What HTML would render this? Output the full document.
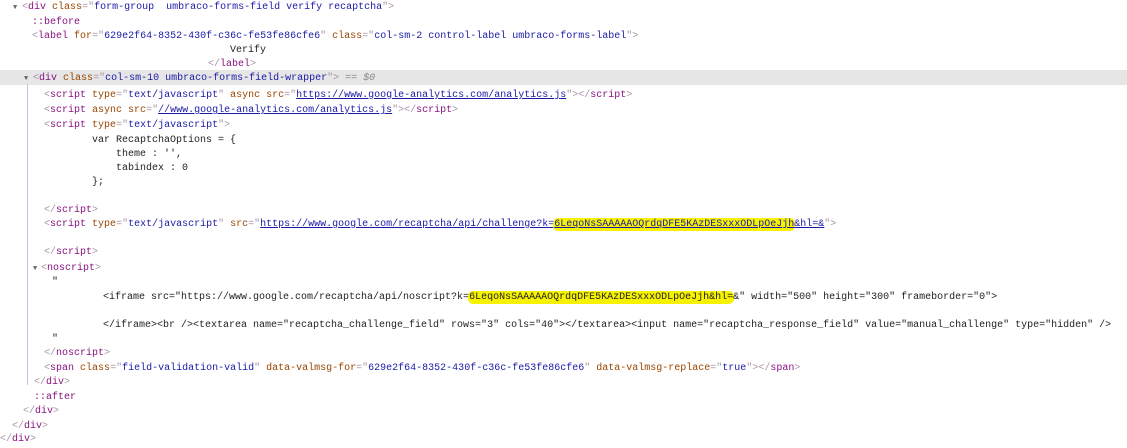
<!DOCTYPE html>
<html><head><meta charset="utf-8"><style>
body{margin:0;width:1127px;height:445px;background:#fff;overflow:hidden;position:relative;font-family:"Liberation Mono",monospace;font-size:10px;color:#222}
.w{position:absolute;left:0;top:3px;width:1127px;height:445px}
.l{position:absolute;white-space:pre;line-height:14px;height:14px}
.t{color:#881280}.p{color:#a894a6}.a{color:#994500}.v{color:#1a1aa6}.u{color:#1a1aa6;text-decoration:underline}
.hl{background:#f7f200;border-radius:4px;box-shadow:0 0 0 1px #f7f200}
.tri{position:absolute;font-size:7px;color:#666}
.g{position:absolute;left:27px;top:84px;width:1px;height:301px;background:#b8c8e0}
.sel{position:absolute;left:0;top:70px;width:1127px;height:15px;background:#e6e6e6}
.d{color:#888;font-style:italic}
</style></head><body>
<div class="sel"></div>
<div class="g"></div>
<div class="w">
<span class="tri" style="left:13px;top:1px">▼</span>
<div class="l" style="left:22px;top:-2px"><span class="p">&lt;</span><span class="t">div</span> <span class="a">class</span><span class="p">="</span><span class="v">form-group  umbraco-forms-field verify recaptcha</span><span class="p">"&gt;</span></div>
<div class="l" style="left:32px;top:13px"><span class="t">::before</span></div>
<div class="l" style="left:32px;top:27px"><span class="p">&lt;</span><span class="t">label</span> <span class="a">for</span><span class="p">="</span><span class="v">629e2f64-8352-430f-c36c-fe53fe86cfe6</span><span class="p">"</span> <span class="a">class</span><span class="p">="</span><span class="v">col-sm-2 control-label umbraco-forms-label</span><span class="p">"&gt;</span></div>
<div class="l" style="left:230px;top:41px">Verify</div>
<div class="l" style="left:208px;top:55px"><span class="p">&lt;/</span><span class="t">label</span><span class="p">&gt;</span></div>
<span class="tri" style="left:24px;top:72px">▼</span>
<div class="l" style="left:33px;top:69px"><span class="p">&lt;</span><span class="t">div</span> <span class="a">class</span><span class="p">="</span><span class="v">col-sm-10 umbraco-forms-field-wrapper</span><span class="p">"&gt;</span> <span class="d">== $0</span></div>
<div class="l" style="left:44px;top:86px"><span class="p">&lt;</span><span class="t">script</span> <span class="a">type</span><span class="p">="</span><span class="v">text/javascript</span><span class="p">"</span> <span class="a">async src</span><span class="p">="</span><span class="u">https://www.google-analytics.com/analytics.js</span><span class="p">"&gt;&lt;/</span><span class="t">script</span><span class="p">&gt;</span></div>
<div class="l" style="left:44px;top:101px"><span class="p">&lt;</span><span class="t">script</span> <span class="a">async src</span><span class="p">="</span><span class="u">//www.google-analytics.com/analytics.js</span><span class="p">"&gt;&lt;/</span><span class="t">script</span><span class="p">&gt;</span></div>
<div class="l" style="left:44px;top:116px"><span class="p">&lt;</span><span class="t">script</span> <span class="a">type</span><span class="p">="</span><span class="v">text/javascript</span><span class="p">"&gt;</span></div>
<div class="l" style="left:92px;top:131px">var RecaptchaOptions = {</div>
<div class="l" style="left:116px;top:145px">theme : '',</div>
<div class="l" style="left:116px;top:159px">tabindex : 0</div>
<div class="l" style="left:92px;top:173px">};</div>
<div class="l" style="left:44px;top:201px"><span class="p">&lt;/</span><span class="t">script</span><span class="p">&gt;</span></div>
<div class="l" style="left:44px;top:215px"><span class="p">&lt;</span><span class="t">script</span> <span class="a">type</span><span class="p">="</span><span class="v">text/javascript</span><span class="p">"</span> <span class="a">src</span><span class="p">="</span><span class="u">https://www.google.com/recaptcha/api/challenge?k=<span class="hl">6LeqoNsSAAAAAOQrdqDFE5KAzDESxxxODLpOeJjh</span>&amp;hl=&amp;</span><span class="p">"&gt;</span></div>
<div class="l" style="left:44px;top:243px"><span class="p">&lt;/</span><span class="t">script</span><span class="p">&gt;</span></div>
<span class="tri" style="left:33px;top:262px">▼</span>
<div class="l" style="left:41px;top:259px"><span class="p">&lt;</span><span class="t">noscript</span><span class="p">&gt;</span></div>
<div class="l" style="left:52px;top:273px">"</div>
<div class="l" style="left:103px;top:288px">&lt;iframe src="https://www.google.com/recaptcha/api/noscript?k=<span class="hl">6LeqoNsSAAAAAOQrdqDFE5KAzDESxxxODLpOeJjh&amp;hl=</span>&amp;" width="500" height="300" frameborder="0"&gt;</div>
<div class="l" style="left:103px;top:316px">&lt;/iframe&gt;&lt;br /&gt;&lt;textarea name="recaptcha_challenge_field" rows="3" cols="40"&gt;&lt;/textarea&gt;&lt;input name="recaptcha_response_field" value="manual_challenge" type="hidden" /&gt;</div>
<div class="l" style="left:52px;top:330px">"</div>
<div class="l" style="left:44px;top:344px"><span class="p">&lt;/</span><span class="t">noscript</span><span class="p">&gt;</span></div>
<div class="l" style="left:44px;top:359px"><span class="p">&lt;</span><span class="t">span</span> <span class="a">class</span><span class="p">="</span><span class="v">field-validation-valid</span><span class="p">"</span> <span class="a">data-valmsg-for</span><span class="p">="</span><span class="v">629e2f64-8352-430f-c36c-fe53fe86cfe6</span><span class="p">"</span> <span class="a">data-valmsg-replace</span><span class="p">="</span><span class="v">true</span><span class="p">"&gt;&lt;/</span><span class="t">span</span><span class="p">&gt;</span></div>
<div class="l" style="left:34px;top:373px"><span class="p">&lt;/</span><span class="t">div</span><span class="p">&gt;</span></div>
<div class="l" style="left:34px;top:388px"><span class="t">::after</span></div>
<div class="l" style="left:23px;top:402px"><span class="p">&lt;/</span><span class="t">div</span><span class="p">&gt;</span></div>
<div class="l" style="left:12px;top:417px"><span class="p">&lt;/</span><span class="t">div</span><span class="p">&gt;</span></div>
<div class="l" style="left:0px;top:430px"><span class="p">&lt;/</span><span class="t">div</span><span class="p">&gt;</span></div>
</div>
</body></html>
